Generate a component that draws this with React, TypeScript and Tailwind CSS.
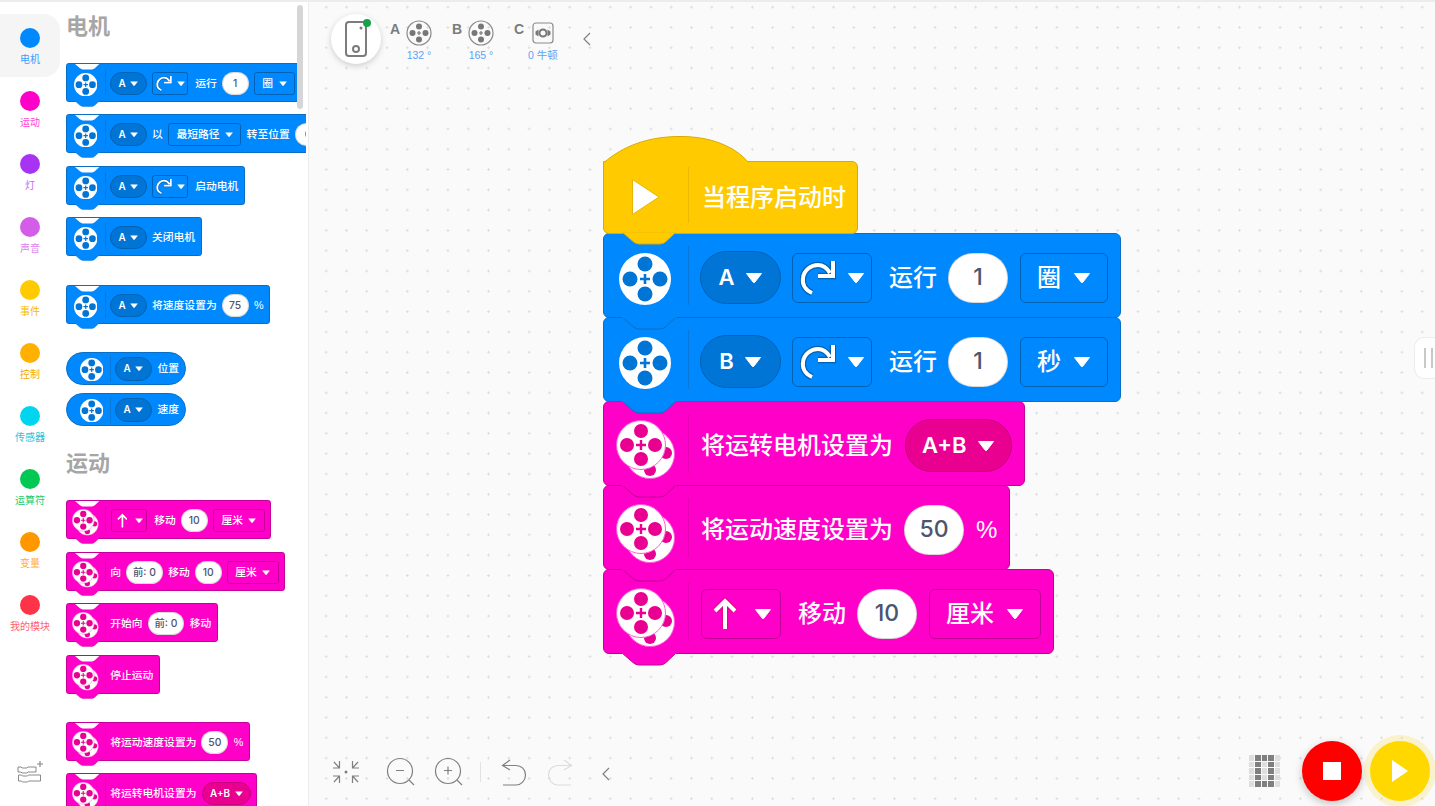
import type { ReactNode } from 'react';

const font = { fontFamily: '"Liberation Sans", "Noto Sans CJK SC", sans-serif' };
const latin = { fontFamily: 'Inter, "Noto Sans CJK SC", sans-serif' };

const categories = [
    { label: '电机', dot: 'bg-[#0088ff]', text: 'text-[#3a9fff]', active: true },
    { label: '运动', dot: 'bg-[#ff00c8]', text: 'text-[#ff3fd3]' },
    { label: '灯', dot: 'bg-[#a933f5]', text: 'text-[#c06af7]' },
    { label: '声音', dot: 'bg-[#d35de8]', text: 'text-[#de85ee]' },
    { label: '事件', dot: 'bg-[#ffcb00]', text: 'text-[#f5b800]' },
    { label: '控制', dot: 'bg-[#ffb000]', text: 'text-[#f5a800]' },
    { label: '传感器', dot: 'bg-[#00d5f0]', text: 'text-[#1cc4dc]' },
    { label: '运算符', dot: 'bg-[#00c853]', text: 'text-[#1ecb68]' },
    { label: '变量', dot: 'bg-[#ff9800]', text: 'text-[#ffae40]' },
    { label: '我的模块', dot: 'bg-[#ff3347]', text: 'text-[#ff5f6e]' },
];

type Tone = 'blue' | 'pink';

const tones = {
    blue: {
        block: 'bg-[#0088ff] border-[#0a6fc4]',
        tab: 'fill-[#0088ff] stroke-[#0a6fc4]',
        well: 'bg-[#0075d6] border-[#0062b3]',
        box: 'bg-[#0088ff] border-[#0062b3]',
        divider: 'bg-[#0a78d8]',
    },
    pink: {
        block: 'bg-[#ff00c8] border-[#c4009a]',
        tab: 'fill-[#ff00c8] stroke-[#c4009a]',
        well: 'bg-[#ea0090] border-[#c4007c]',
        box: 'bg-[#ff00c8] border-[#c4009a]',
        divider: 'bg-[#e800b4]',
    },
};

function Caret() {
    return (
        <svg width="18" height="12" viewBox="0 0 18 12" className="shrink-0">
            <path d="M1.500 1.500h15L10 10q-1 1-2 0z" fill="#fff" stroke="#fff" strokeWidth="1" strokeLinejoin="round" />
        </svg>
    );
}

function MotorIcon() {
    return (
        <svg width="52" height="52" viewBox="0 0 52 52" className="shrink-0">
            <circle cx="26" cy="26" r="26" fill="#fff" />
            <g fill="#0075d6">
                <circle cx="26" cy="11" r="7.500" />
                <circle cx="26" cy="41" r="7.500" />
                <circle cx="11" cy="26" r="7.500" />
                <circle cx="41" cy="26" r="7.500" />
                <path d="M24.700 21h2.600v3.700H31v2.600h-3.700V31h-2.600v-3.700H21v-2.600h3.700z" />
            </g>
        </svg>
    );
}

function MoveIcon() {
    return (
        <svg width="60" height="60" viewBox="0 0 60 60" className="shrink-0">
            <circle cx="34" cy="34" r="24.500" fill="#fff" stroke="#ff5cdc" strokeWidth="1" />
            <g fill="#ea0090">
                <circle cx="50" cy="33" r="6" />
                <circle cx="34" cy="50" r="6" />
            </g>
            <circle cx="25" cy="25" r="24.500" fill="#fff" stroke="#ff5cdc" strokeWidth="1" />
            <g fill="#ea0090">
                <circle cx="25" cy="11" r="7" />
                <circle cx="25" cy="39" r="7" />
                <circle cx="11" cy="25" r="7" />
                <circle cx="39" cy="25" r="7" />
                <path d="M23.800 20h2.400v3.800H30v2.400h-3.800V30h-2.400v-3.800H20v-2.400h3.800z" />
            </g>
        </svg>
    );
}

const turnArc = 'M12 34C5 31 2 25 3 19 4 11 11 6 18 6c5 0 9 3 12 8';
const turnHead = 'M33 2v15H18';

function TurnGlyph() {
    return (
        <svg width="36" height="38" viewBox="0 0 36 38" className="shrink-0">
            <path d={turnArc} fill="none" stroke="#0062b3" strokeWidth="6.500" />
            <path d={turnHead} fill="none" stroke="#0062b3" strokeWidth="6.500" />
            <path d={turnArc} fill="none" stroke="#fff" strokeWidth="4" />
            <path d={turnHead} fill="none" stroke="#fff" strokeWidth="4" />
        </svg>
    );
}

function UpArrow() {
    return (
        <svg width="24" height="34" viewBox="0 0 24 34" className="shrink-0">
            <path d="M12 32V4M2 14 12 4l10 10" fill="none" stroke="#ea0090" strokeWidth="6.500" />
            <path d="M12 32V4M2 14 12 4l10 10" fill="none" stroke="#fff" strokeWidth="4" />
        </svg>
    );
}

function Pill({ tone, children }: { tone: Tone; children: ReactNode }) {
    return (
        <div
            className={`flex h-[53px] min-w-[81px] shrink-0 items-center justify-center gap-[10px] rounded-full border px-[16px] text-[22px] font-semibold text-white ${tones[tone].well}`}
            style={latin}
        >
            {children}
            <Caret />
        </div>
    );
}

function Menu({ tone, children }: { tone: Tone; children: ReactNode }) {
    return (
        <div className={`flex h-[50px] shrink-0 items-center justify-center gap-[12px] rounded-[6px] border px-[16px] text-[24px] font-medium text-white ${tones[tone].box}`}>
            {children}
            <Caret />
        </div>
    );
}

function TurnMenu() {
    return (
        <div className={`-ml-px flex h-[50px] w-[80px] shrink-0 items-center gap-[11px] rounded-[6px] border pl-[7px] ${tones.blue.box}`}>
            <TurnGlyph />
            <Caret />
        </div>
    );
}

function ArrowMenu() {
    return (
        <div className={`ml-px flex h-[50px] w-[80px] shrink-0 items-center gap-[17px] rounded-[6px] border pl-[11px] ${tones.pink.box}`}>
            <UpArrow />
            <Caret />
        </div>
    );
}

function Field({ children, wide }: { children: ReactNode; wide?: boolean }) {
    return (
        <div
            className={`-ml-px flex h-[50px] shrink-0 items-center justify-center rounded-full border border-black/15 bg-white text-[23px] font-medium text-[#4c5570] ${wide ? 'w-[82px]' : 'w-[60px]'}`}
            style={latin}
        >
            {children}
        </div>
    );
}

function Label({ className, children }: { className?: string; children: ReactNode }) {
    return (
        <span className={`shrink-0 text-[24px] leading-none font-medium whitespace-nowrap text-white ${className ?? ''}`}>
            {children}
        </span>
    );
}

function Block({ tone, compact, zIndex, children }: { tone: Tone; compact?: boolean; zIndex?: string; children: ReactNode }) {
    const t = tones[tone];
    return (
        <div
            className={`relative flex w-fit items-center gap-[12px] rounded-[6px] border pt-[4px] pr-[12px] pl-[96px] ${t.block} ${
                compact ? 'h-[87px] [zoom:0.45]' : 'h-[85px]'
            } ${zIndex ?? ''}`}
        >
            {compact && (
                <svg width="54" height="13" viewBox="0 0 54 13" className="absolute top-[-1px] left-[18px] overflow-visible">
                    <path d="M0 0h54L44 9.500q-3 2.500-6 2.500H17q-3 0-6-2.500z" className="fill-white" />
                </svg>
            )}
            <svg width="54" height="13" viewBox="0 0 54 13" className="absolute bottom-[-13px] left-[18px] overflow-visible">
                <path d="M0 0 11 9.500q3 2.500 6 2.500h21q3 0 6-2.500L54 0" className={t.tab} strokeWidth="1" />
                <path d="M0-1h54v2H0z" className={t.tab} strokeWidth="0" />
            </svg>
            {tone === 'blue' ? (
                <div className="absolute top-[19px] left-[15px]">
                    <MotorIcon />
                </div>
            ) : (
                <div className="absolute top-[18px] left-[12px]">
                    <MoveIcon />
                </div>
            )}
            <div className={`absolute top-[12px] bottom-[12px] left-[84px] w-px ${t.divider}`} />
            {children}
        </div>
    );
}

function Reporter({ children }: { children: ReactNode }) {
    return (
        <div className="relative flex h-[74px] w-fit items-center gap-[13px] rounded-full border border-[#0a6fc4] bg-[#0088ff] pr-[14px] pl-[107px] [zoom:0.45]">
            <div className="absolute top-[10px] left-[28px]">
                <MotorIcon />
            </div>
            <div className="absolute top-[6px] bottom-[6px] left-[95px] w-px bg-[#0a78d8]" />
            {children}
        </div>
    );
}

function HatBlock() {
    return (
        <div className="relative z-10 flex h-[73px] w-[255px] items-center rounded-[6px] rounded-tl-none border border-[#d9aa00] bg-[#ffcb00] pl-[98px] text-[24px] font-medium whitespace-nowrap text-white">
            <svg width="147" height="27" viewBox="0 0 147 27" className="absolute top-[-26px] left-[-1px] overflow-visible">
                <path d="M.5 27C20 10 45 .5 77 .5c30 0 54 9 69 26.500" fill="#ffcb00" stroke="#d9aa00" strokeWidth="1" />
                <path d="M1 26h145v3H1z" fill="#ffcb00" />
            </svg>
            <svg width="30" height="38" viewBox="0 0 30 38" className="absolute top-[16px] left-[27px]">
                <path d="M1.500 1.500v35L28 19z" fill="#fff" stroke="#e5b700" strokeWidth="1" />
            </svg>
            <div className="absolute top-[5px] bottom-[10px] left-[84px] w-px bg-[#ecbb00]" />
            当程序启动时
            <svg width="54" height="13" viewBox="0 0 54 13" className="absolute bottom-[-12px] left-[18px] overflow-visible">
                <path d="M0 0 11 9.500q3 2.500 6 2.500h21q3 0 6-2.500L54 0z" fill="#ffcb00" stroke="#d9aa00" strokeWidth="1" />
                <path d="M0-2h54v2.500H0z" fill="#ffcb00" />
            </svg>
        </div>
    );
}

function Stack() {
    return (
        <div className="absolute top-[133px] left-[294px] flex flex-col pt-[26px]" style={font}>
            <HatBlock />
            <div className="-mt-px">
                <Block tone="blue" zIndex="z-[9]">
                    <Pill tone="blue">A</Pill>
                    <TurnMenu />
                    <Label className="ml-[5px]">运行</Label>
                    <Field>1</Field>
                    <Menu tone="blue">圈</Menu>
                </Block>
            </div>
            <div className="-mt-px">
                <Block tone="blue" zIndex="z-[8]">
                    <Pill tone="blue">B</Pill>
                    <TurnMenu />
                    <Label className="ml-[5px]">运行</Label>
                    <Field>1</Field>
                    <Menu tone="blue">秒</Menu>
                </Block>
            </div>
            <div className="-mt-px">
                <Block tone="pink" zIndex="z-[7]">
                    <Label className="ml-[1px]">将运转电机设置为</Label>
                    <Pill tone="pink">A+B</Pill>
                </Block>
            </div>
            <div className="-mt-px">
                <Block tone="pink" zIndex="z-[6]">
                    <Label className="ml-[1px]">将运动速度设置为</Label>
                    <Field>50</Field>
                    <Label>%</Label>
                </Block>
            </div>
            <div className="-mt-px">
                <Block tone="pink" zIndex="z-[5]">
                    <ArrowMenu />
                    <Label className="ml-[5px]">移动</Label>
                    <Field>10</Field>
                    <Menu tone="pink">厘米</Menu>
                </Block>
            </div>
        </div>
    );
}

function Palette() {
    return (
        <div className="relative h-full w-[246px] shrink-0 overflow-hidden pl-[6px]" style={font}>
            <div className="absolute top-[3px] right-[3px] z-20 h-[104px] w-[6px] rounded-full bg-[#d6d6d6]" />
            <h2 className="mt-[11px] h-[27px] text-[22px] leading-[27px] font-bold text-[#a6a6a6]">电机</h2>
            <div className="mt-[23px] h-[39px]">
                <Block tone="blue" compact>
                    <Pill tone="blue">A</Pill>
                    <TurnMenu />
                    <Label className="ml-[5px]">运行</Label>
                    <Field>1</Field>
                    <Menu tone="blue">圈</Menu>
                </Block>
            </div>
            <div className="mt-[12px] h-[39px] w-[400px]">
                <Block tone="blue" compact>
                    <Pill tone="blue">A</Pill>
                    <Label>以</Label>
                    <Menu tone="blue">最短路径</Menu>
                    <Label>转至位置</Label>
                    <Field>0</Field>
                </Block>
            </div>
            <div className="mt-[13px] h-[39px]">
                <Block tone="blue" compact>
                    <Pill tone="blue">A</Pill>
                    <TurnMenu />
                    <Label className="ml-[5px]">启动电机</Label>
                </Block>
            </div>
            <div className="mt-[12px] h-[39px]">
                <Block tone="blue" compact>
                    <Pill tone="blue">A</Pill>
                    <Label>关闭电机</Label>
                </Block>
            </div>
            <div className="mt-[29px] h-[39px]">
                <Block tone="blue" compact>
                    <Pill tone="blue">A</Pill>
                    <Label>将速度设置为</Label>
                    <Field>75</Field>
                    <Label>%</Label>
                </Block>
            </div>
            <div className="mt-[28px] h-[33px]">
                <Reporter>
                    <Pill tone="blue">A</Pill>
                    <Label>位置</Label>
                </Reporter>
            </div>
            <div className="mt-[8px] h-[33px]">
                <Reporter>
                    <Pill tone="blue">A</Pill>
                    <Label>速度</Label>
                </Reporter>
            </div>
            <h2 className="mt-[24px] h-[27px] text-[22px] leading-[27px] font-bold text-[#a6a6a6]">运动</h2>
            <div className="mt-[23px] h-[39px]">
                <Block tone="pink" compact>
                    <ArrowMenu />
                    <Label className="ml-[5px]">移动</Label>
                    <Field>10</Field>
                    <Menu tone="pink">厘米</Menu>
                </Block>
            </div>
            <div className="mt-[13px] h-[39px]">
                <Block tone="pink" compact>
                    <Label>向</Label>
                    <Field wide>前: 0</Field>
                    <Label>移动</Label>
                    <Field>10</Field>
                    <Menu tone="pink">厘米</Menu>
                </Block>
            </div>
            <div className="mt-[12px] h-[39px]">
                <Block tone="pink" compact>
                    <Label>开始向</Label>
                    <Field wide>前: 0</Field>
                    <Label>移动</Label>
                </Block>
            </div>
            <div className="mt-[13px] h-[39px]">
                <Block tone="pink" compact>
                    <Label>停止运动</Label>
                </Block>
            </div>
            <div className="mt-[28px] h-[39px]">
                <Block tone="pink" compact>
                    <Label>将运动速度设置为</Label>
                    <Field>50</Field>
                    <Label>%</Label>
                </Block>
            </div>
            <div className="mt-[12px] h-[39px]">
                <Block tone="pink" compact>
                    <Label>将运转电机设置为</Label>
                    <Pill tone="pink">A+B</Pill>
                </Block>
            </div>
        </div>
    );
}

function CategoryRail() {
    return (
        <div className="flex h-full w-[60px] shrink-0 flex-col pt-[12px]" style={font}>
            {categories.map((c) => (
                <div
                    key={c.label}
                    className={`flex h-[63px] flex-col items-center pt-[14px] ${c.active ? 'rounded-r-[16px] bg-[#f5f5f5]' : ''}`}
                >
                    <span className={`h-5 w-5 shrink-0 rounded-full ${c.dot}`} />
                    <span className={`mt-[5px] text-[10px] leading-[13px] whitespace-nowrap ${c.text}`}>{c.label}</span>
                </div>
            ))}
            <div className="mt-auto mb-[21px] flex justify-center">
                <svg width="26" height="24" viewBox="0 0 26 24" fill="none" stroke="#8a8a8a" strokeWidth="1">
                    <path d="M1 6h3l1 1h5l1-1h8v5h-8l-1 1H5l-1-1H1z" />
                    <path d="M1.500 14h3l1 1h5l1-1h12v6h-12l-1 1h-5l-1-1h-3z" />
                    <path d="M20 3h6M23 0v6" strokeWidth="1.200" />
                </svg>
            </div>
        </div>
    );
}

function PortIcon({ kind }: { kind: 'motor' | 'force' }) {
    if (kind === 'force') {
        return (
            <svg width="26" height="26" viewBox="0 0 26 26" className="shrink-0">
                <rect x="3" y="3" width="20" height="20" rx="3" fill="none" stroke="#8a8a8a" strokeWidth="1.200" />
                <circle cx="13" cy="13" r="3.500" fill="none" stroke="#777" strokeWidth="2" />
                <path d="M8.500 9.500v7l-3-2v-3zM17.500 9.500v7l3-2v-3z" fill="#777" />
            </svg>
        );
    }
    return (
        <svg width="26" height="26" viewBox="0 0 26 26" className="shrink-0">
            <circle cx="13" cy="13" r="12" fill="none" stroke="#8a8a8a" strokeWidth="1.200" />
            <g fill="#777">
                <circle cx="13" cy="6.500" r="3" />
                <circle cx="13" cy="19.500" r="3" />
                <circle cx="6.500" cy="13" r="3" />
                <circle cx="19.500" cy="13" r="3" />
                <path d="M12.400 11h1.200v1.400H15v1.200h-1.400V15h-1.200v-1.400H11v-1.200h1.400z" />
            </g>
        </svg>
    );
}

function Port({ name, kind, value }: { name: string; kind: 'motor' | 'force'; value: string }) {
    return (
        <div className="flex items-start">
            <span className="mt-[1px] w-[10px] text-[14px] leading-[16px] font-bold text-[#7c7c7c]">{name}</span>
            <div className="flex w-[38px] flex-col items-center">
                <PortIcon kind={kind} />
                <span className="mt-[3px] text-[10.5px] leading-[12px] whitespace-nowrap text-[#5aa2f5]">{value}</span>
            </div>
        </div>
    );
}

function Toolbar() {
    return (
        <div className="absolute top-[12px] left-[22px] flex items-center" style={font}>
            <div className="relative flex h-[50px] w-[50px] items-center justify-center rounded-full bg-white shadow-[0_2px_6px_rgba(0,0,0,0.18)]">
                <svg width="24" height="38" viewBox="0 0 24 38" fill="none" stroke="#7c7c7c">
                    <rect x="2" y="2" width="20" height="34" rx="3" strokeWidth="2" />
                    <circle cx="12" cy="29" r="3" strokeWidth="2" />
                    <circle cx="17" cy="8" r="1.500" fill="#7c7c7c" strokeWidth="0" />
                </svg>
                <span className="absolute top-[5px] right-[10px] h-2 w-2 rounded-full bg-[#16a34a]" />
            </div>
            <div className="mt-[3px] ml-[9px] flex gap-[14px]">
                <Port name="A" kind="motor" value="132 °" />
                <Port name="B" kind="motor" value="165 °" />
                <Port name="C" kind="force" value="0 牛顿" />
            </div>
            <svg width="10" height="14" viewBox="0 0 10 14" fill="none" stroke="#808080" strokeWidth="1.200" className="ml-[20px]">
                <path d="M8 1 2 7l6 6" />
            </svg>
        </div>
    );
}

function ZoomControls() {
    return (
        <div className="absolute bottom-[18px] left-[23px] flex h-[32px] items-center">
            <svg width="28" height="28" viewBox="0 0 28 28" fill="none" stroke="#808080" strokeWidth="1.200">
                <path d="M1 10h6.500V3M7.500 10 2 4M27 10h-6.500V3M20.500 10 26 4M1 18h6.500v7M7.500 18 2 24M27 18h-6.500v7M20.500 18 26 24" />
                <circle cx="14" cy="14" r="1.500" fill="#808080" stroke="none" />
            </svg>
            <svg width="30" height="30" viewBox="0 0 30 30" fill="none" stroke="#808080" strokeWidth="1.200" className="ml-[26px]">
                <circle cx="14" cy="14" r="12.500" />
                <path d="M10 13.500h8M23 23l5 5" />
            </svg>
            <svg width="30" height="30" viewBox="0 0 30 30" fill="none" stroke="#808080" strokeWidth="1.200" className="ml-[18px]">
                <circle cx="14" cy="14" r="12.500" />
                <path d="M10 13.500h8M14 9.500v8M23 23l5 5" />
            </svg>
            <div className="ml-[16px] h-[20px] w-px bg-[#e3e3e3]" />
            <svg width="26" height="27" viewBox="0 0 26 27" fill="none" stroke="#808080" strokeWidth="1.200" className="ml-[20px]">
                <path d="M9 1 1.500 6.500 9 11M1.500 6.500H15c5.500 0 9.500 4 9.500 9.500S20 26 15 26H2" />
            </svg>
            <svg width="26" height="27" viewBox="0 0 26 27" fill="none" stroke="#dcdcdc" strokeWidth="1.200" className="ml-[20px]">
                <path d="M17 1l7.500 5.500L17 11M24.500 6.500H11C5.500 6.500 1.500 10.500 1.500 16S6 26 11 26h13" />
            </svg>
            <svg width="10" height="14" viewBox="0 0 10 14" fill="none" stroke="#808080" strokeWidth="1.200" className="mt-[3px] ml-[28px]">
                <path d="M8 1 2 7l6 6" />
            </svg>
        </div>
    );
}

const matrix = [
    0, 1, 1, 1, 0,
    0, 1, 0, 1, 0,
    0, 1, 0, 1, 0,
    0, 1, 0, 1, 0,
    0, 1, 1, 1, 0,
];

function RunControls() {
    return (
        <div className="absolute right-[5px] bottom-[5px] flex items-center">
            <div className="mr-[22px] grid grid-cols-5 gap-px">
                {matrix.map((v, i) => (
                    <span key={i} className={`h-[5.500px] w-[5.500px] ${v === 0 ? 'bg-[#dedede]' : 'bg-[#7f7f7f]'}`} />
                ))}
            </div>
            <div className="mr-[8px] flex h-[60px] w-[60px] items-center justify-center rounded-full bg-[#ff0000] shadow-[0_3px_8px_rgba(0,0,0,0.22)]">
                <span className="h-[18px] w-[18px] bg-white" />
            </div>
            <div className="flex h-[60px] w-[60px] items-center justify-center rounded-full bg-[#ffd800] shadow-[0_0_0_6px_rgba(245,225,120,0.35)]">
                <svg width="18" height="22" viewBox="0 0 18 22">
                    <path d="M1 0v22l16-11z" fill="#fff" />
                </svg>
            </div>
        </div>
    );
}

export default function App() {
    return (
        <div className="flex h-[806px] w-[1435px] overflow-hidden border-t-2 border-[#ececec] bg-white">
            <CategoryRail />
            <Palette />
            <main className="relative ml-[2px] flex-1 border-l border-[#ececec] bg-[#fafafa] bg-[radial-gradient(#dedede_1px,transparent_1.2px)] bg-size-[20.3px_20.3px] bg-position-[7px_-5px]">
                <Toolbar />
                <Stack />
                <ZoomControls />
                <RunControls />
                <div className="absolute top-[335px] right-0 flex h-[42px] w-[21px] items-center gap-[5px] rounded-l-[10px] border border-r-0 border-[#ececec] bg-white pl-[9px]">
                    <span className="h-[20px] w-[2px] bg-[#c8c8c8]" />
                    <span className="h-[20px] w-[2px] bg-[#c8c8c8]" />
                </div>
            </main>
        </div>
    );
}
